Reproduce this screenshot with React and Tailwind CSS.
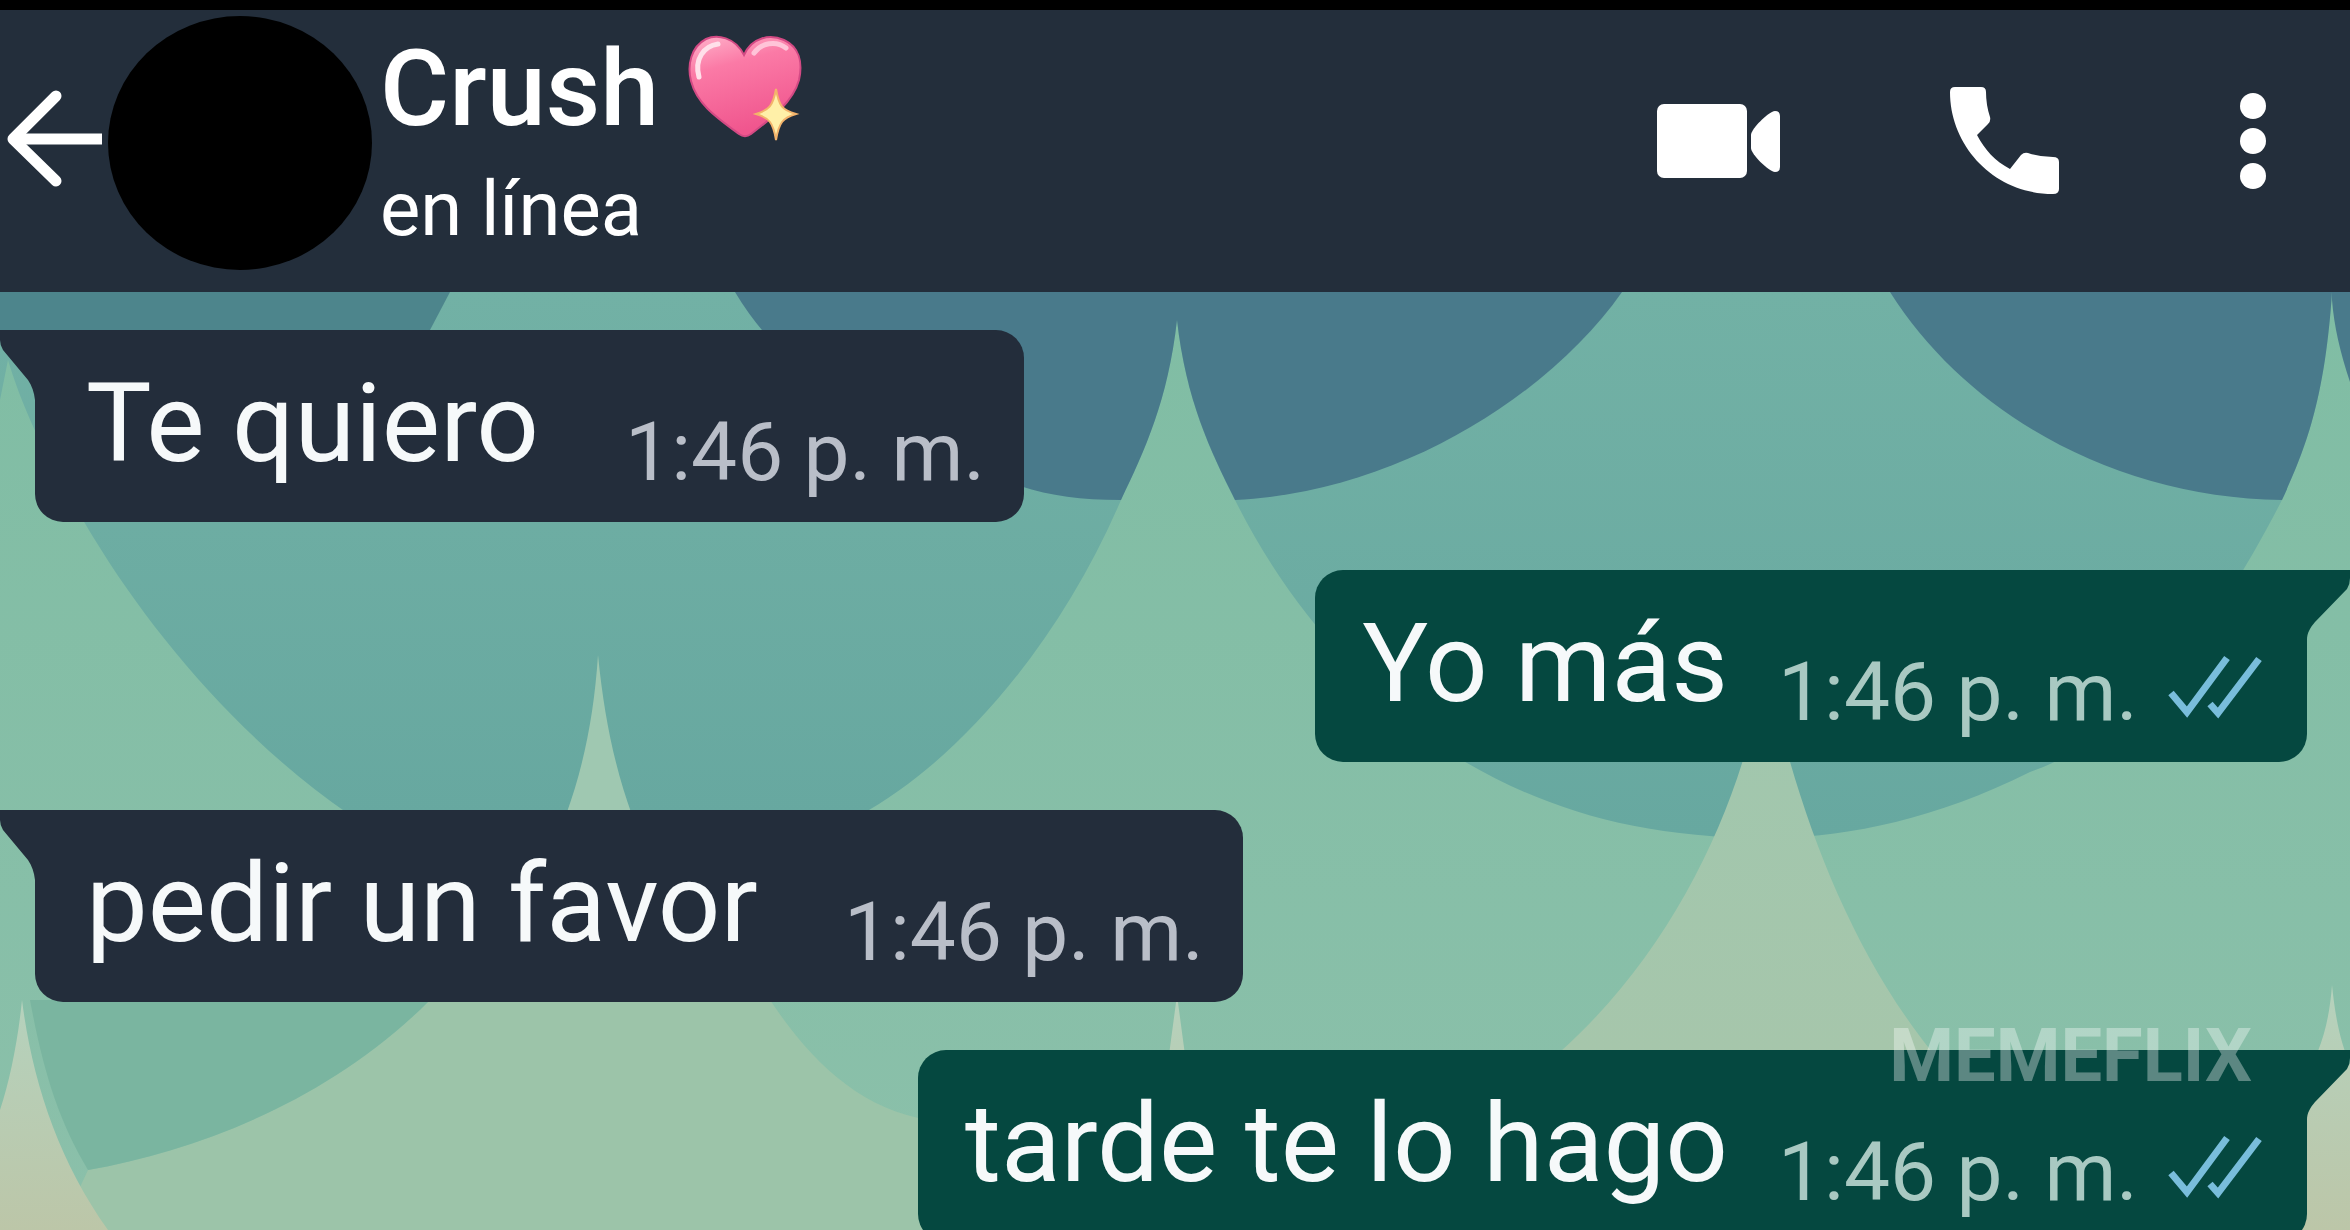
const messages = [
  { id: 1, text: 'Te quiero', time: '1:46 p. m.', mine: false },
  { id: 2, text: 'Yo más', time: '1:46 p. m.', mine: true },
  { id: 3, text: 'pedir un favor', time: '1:46 p. m.', mine: false },
  { id: 4, text: 'tarde te lo hago', time: '1:46 p. m.', mine: true, watermark: 'MEMEFLIX' }
];

function BackIcon() {
  return (
    <svg viewBox="0 0 100 108" className="w-[100px] h-[108px]" fill="none" stroke="white" strokeWidth="11" strokeLinecap="round" strokeLinejoin="round">
      <path d="M52 7 9 50l43 42" />
      <path d="M10 50h88" strokeLinecap="butt" />
    </svg>
  );
}

function VideoIcon() {
  return (
    <svg viewBox="0 0 128 80" className="w-32 h-20" fill="white">
      <rect x="1" y="1" width="90" height="74" rx="7" />
      <path d="M95 32c0-6 17-23 24-24q5 0 5 5v51q0 5-5 5c-7-1-24-18-24-24z" />
    </svg>
  );
}

function PhoneIcon() {
  return (
    <svg viewBox="0 0 110 112" className="w-[110px] h-28" fill="white">
      <path d="M5 0h26q5 0 5 5 0 13 4 25 1 4-2 7L27 48c8 15 18 26 33 34l11-14q3-3 7-2 12 4 25 4 6 0 6 5v27q0 5-6 5C45 107 0 60 0 5q0-5 5-5z" />
    </svg>
  );
}

function DotsIcon() {
  return (
    <svg viewBox="0 0 30 104" className="w-[30px] h-26" fill="white">
      <circle cx="15" cy="15" r="13" />
      <circle cx="15" cy="50" r="13" />
      <circle cx="15" cy="85" r="13" />
    </svg>
  );
}

function HeartEmoji() {
  return (
    <svg viewBox="0 0 118 108" className="w-[118px] h-[108px]" role="img" aria-label="Corazón">
      <defs>
        <linearGradient id="heart" x1="0" y1="0" x2="0.3" y2="1">
          <stop offset="0" stopColor="#ffb3cb" />
          <stop offset="0.35" stopColor="#fb7aa6" />
          <stop offset="1" stopColor="#f0568e" />
        </linearGradient>
      </defs>
      <path d="M57 20C48 2 30-1 19 4 4 12 0 30 4 46c6 23 25 36 48 53 4 3 8 3 12 0 21-16 42-32 48-54 4-18 0-33-15-40C83-1 65 2 57 20z" fill="url(#heart)" stroke="#d34a84" strokeWidth="2" />
      <path d="M12 42C7 24 17 11 31 9" stroke="#ffe0ea" strokeWidth="5" strokeLinecap="round" fill="none" />
      <path d="M67 18c7-10 22-13 32-5" stroke="#ffc4d8" strokeWidth="5" strokeLinecap="round" fill="none" />
      <path d="M89 54c3 17 6 21 20 25-13 4-17 8-20 26-3-18-7-22-20-26 13-4 17-8 20-25z" fill="#fff0a8" stroke="#f3b36b" strokeWidth="2" />
    </svg>
  );
}

function CheckIcon() {
  return (
    <svg viewBox="0 0 98 66" className="w-[98px] h-[66px]" fill="none" stroke="#79bddb" strokeWidth="7">
      <path d="M5 38 21 57 61 3" />
      <path d="M44 49 52 58 93 4" />
    </svg>
  );
}

function Wallpaper() {
  return (
    <svg viewBox="0 292 2350 938" preserveAspectRatio="none" className="absolute inset-0 w-full h-full" aria-hidden="true">
      <defs>
        <linearGradient id="base" x1="0" y1="0" x2="0" y2="1">
          <stop offset="0" stopColor="#80bda4" />
          <stop offset="1" stopColor="#8bc0aa" />
        </linearGradient>
        <linearGradient id="teal" x1="0" y1="0" x2="0" y2="1">
          <stop offset="0" stopColor="#72b1a5" />
          <stop offset="1" stopColor="#67a8a0" />
        </linearGradient>
        <linearGradient id="sand" x1="0" y1="0" x2="0" y2="1">
          <stop offset="0" stopColor="#a0c7ae" />
          <stop offset="1" stopColor="#a6c6ab" />
        </linearGradient>
        <linearGradient id="tip" x1="0" y1="0" x2="0" y2="1">
          <stop offset="0" stopColor="#b5d2bd" />
          <stop offset="1" stopColor="#bcc6a8" />
        </linearGradient>
      </defs>
      <rect y="292" width="2350" height="938" fill="url(#base)" />

      {/* escamas turquesa */}
      <path d="M0 292h1177v28c-9 80-32 130-56 180-60 140-160 260-261 315H350C240 740 150 630 95 540 40 450 20 400 8 360L0 400z" fill="url(#teal)" />
      <path d="M1177 320v-28h1155c-7 108-27 158-50 208-72 140-150 236-252 272-100 50-190 66-265 66-145 0-245-38-335-98-70-60-140-130-195-240-25-50-49-100-58-180z" fill="url(#teal)" />

      {/* escamas azules */}
      <path d="M0 292h450L430 330H0z" fill="#4d858c" />
      <path d="M735 292h442v28c-9 80-32 130-56 180-40 0-70-4-101-14-120-34-230-102-285-194z" fill="#497a8b" />
      <path d="M1177 320v-28h445c-70 100-220 200-387 208-25-50-49-100-58-180z" fill="#497a8b" />
      <path d="M1890 292h442c-7 108-27 158-50 208-162-2-312-82-392-208zM2332 300v-8h18v90c-10-30-16-56-18-82z" fill="#497a8b" />

      {/* franja inferior */}
      <path d="M430 1000C330 1100 200 1150 88 1170L60 1230H930V1120C860 1110 810 1060 770 1000z" fill="#9cc4a9" />
      <path d="M30 1000h400c-100 100-230 150-342 170-30-50-45-100-58-170z" fill="#7ab5a0" />
      <path d="M598 655c-4 60-14 110-32 160h66c-18-50-28-100-34-160z" fill="#9fc8b1" />
      <path d="M1765 660c-15 120-80 280-205 392h372c-90-112-140-260-167-392z" fill="url(#sand)" />
      <path d="M22 1000c-4 40-12 80-22 110v120h108c-50-70-76-150-86-230z" fill="url(#tip)" />
      <path d="M1177 995l-8 60h16zM2332 985c-3 40-12 70-32 100v145h50v-165c-8-20-14-40-18-80z" fill="url(#tip)" />
    </svg>
  );
}

function Message({ message }) {
  const { text, time, mine, watermark } = message;

  return (
    <li className={`relative flex ${mine ? 'justify-end' : 'justify-start'}`}>
      {!mine && (
        <svg viewBox="0 0 35 70" className="w-[35px] h-[70px]" fill="#232d3b" aria-hidden="true">
          <path d="M0 0h35v70c-1-8-3-14-7-20L3 20Q0 15 0 10z" />
        </svg>
      )}
      <div
        className={`flex items-end pt-[39px] pb-[29px] ${
          mine
            ? 'bg-[#054840] gap-[50px] pl-[47px] pr-[43px] rounded-l-[28px] rounded-br-[28px]'
            : 'bg-[#232d3b] gap-[86px] pl-[51px] pr-[39px] rounded-r-[28px] rounded-bl-[28px]'
        }`}
      >
        <p className="mb-3.5 text-[110px] leading-[110px] whitespace-nowrap text-[#f6f9fa]">{text}</p>
        <div className="flex items-end gap-7">
          <time className={`text-[82px] leading-[82px] whitespace-nowrap ${mine ? 'text-[#a9c9c2]' : 'text-[#b9bec8]'}`}>{time}</time>
          {mine && <div className="pb-3"><CheckIcon /></div>}
        </div>
      </div>
      {mine && (
        <svg viewBox="0 0 43 70" className="w-[43px] h-[70px]" fill="#054840" aria-hidden="true">
          <path d="M0 0h43v8q0 6-3 11L8 52C3 58 0 63 0 70z" />
        </svg>
      )}
      {watermark && (
        <span className="absolute right-[98px] -top-8 text-[74px] leading-[76px] font-bold text-white/35">
          {watermark}
        </span>
      )}
    </li>
  );
}

export default function App() {
  return (
    <div className="h-screen overflow-hidden flex flex-col bg-[#7ab8a2] font-['Roboto',sans-serif]">
      <header className="shrink-0 flex items-center h-[292px] pr-[82px] pb-4 bg-[#232e3b] border-t-10 border-black text-white">
        <button type="button" aria-label="Atrás" className="shrink-0 ml-1">
          <BackIcon />
        </button>
        <div className="shrink-0 ml-1 w-[264px] h-[254px] rounded-[50%] bg-black" />
        <div className="ml-2 flex-1">
          <h1 className="flex items-center gap-7 text-[106px] leading-[132px] font-medium">
            Crush <HeartEmoji />
          </h1>
          <p className="text-[76px] leading-[108px]">en línea</p>
        </div>
        <div className="flex items-center">
          <button type="button" aria-label="Videollamada"><VideoIcon /></button>
          <button type="button" aria-label="Llamar" className="ml-[166px]"><PhoneIcon /></button>
          <button type="button" aria-label="Más opciones" className="ml-[178px]"><DotsIcon /></button>
        </div>
      </header>
      <main className="relative flex-1 min-h-0 overflow-hidden">
        <Wallpaper />
        <ul className="relative flex flex-col gap-12 pt-[38px]">
          {messages.map((message) => (
            <Message key={message.id} message={message} />
          ))}
        </ul>
      </main>
    </div>
  );
}
